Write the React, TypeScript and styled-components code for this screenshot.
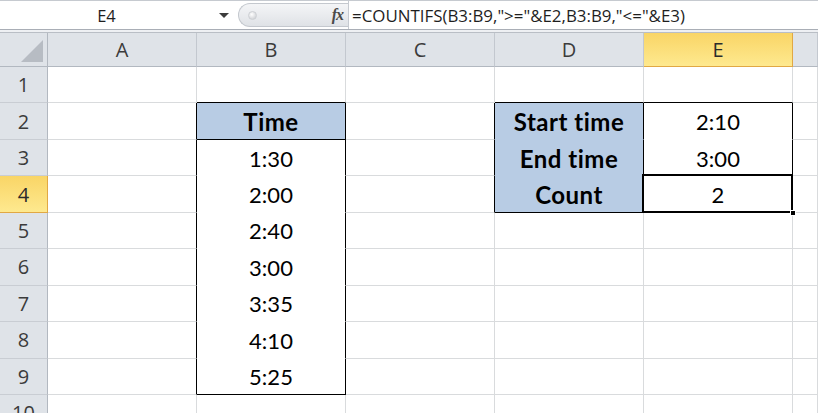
import React from "react";
import styled, { createGlobalStyle, css } from "styled-components";

const GlobalStyle = createGlobalStyle`
  *, *::before, *::after {
    box-sizing: border-box;
  }
  html, body {
    margin: 0;
    padding: 0;
    background: #ffffff;
    overflow: hidden;
  }
`;

const Page = styled.div`
  width: 818px;
  height: 413px;
  overflow: hidden;
  display: flex;
  flex-direction: column;
  background: #ffffff;
  font-family: "Open Sans", "Noto Sans", sans-serif;
`;

const FormulaBar = styled.div`
  flex-shrink: 0;
  height: 30px;
  display: flex;
  align-items: stretch;
  border-top: 1px solid #c6cad0;
  border-bottom: 1px solid #a9aeb6;
  background: #ffffff;
`;

const NameBox = styled.div`
  width: 213px;
  display: flex;
  align-items: center;
  justify-content: center;
  font-size: 16.5px;
  color: #1e1e1e;
`;

const DropArrow = styled.div`
  width: 22px;
  display: flex;
  align-items: center;
  justify-content: center;

  &::before {
    content: "";
    border-left: 5px solid transparent;
    border-right: 5px solid transparent;
    border-top: 5px solid #3c3c3c;
  }
`;

const Pill = styled.div`
  width: 110px;
  margin: 2px 0 2px 3px;
  border-radius: 13px 0 0 13px;
  border: 1px solid #c4c8ce;
  border-right: none;
  background: linear-gradient(#f4f5f7, #dfe2e6);
  display: flex;
  align-items: center;
  justify-content: space-between;
  padding: 0 5px 0 9px;
`;

const CancelDot = styled.span`
  width: 9px;
  height: 9px;
  border-radius: 50%;
  background: radial-gradient(circle at 40% 35%, #ffffff, #c4c7cc);
  border: 1px solid #cdd0d4;
`;

const Fx = styled.span`
  font-family: "Liberation Serif", serif;
  font-style: italic;
  font-weight: bold;
  font-size: 16px;
  color: #4a4a4a;
  letter-spacing: -1px;
`;

const FormulaText = styled.div`
  flex: 1;
  border-left: 1px solid #c6cad0;
  display: flex;
  align-items: center;
  padding-left: 3px;
  font-size: 16.9px;
  color: #1e1e1e;
  white-space: nowrap;
`;

const BarGap = styled.div`
  flex-shrink: 0;
  height: 3px;
  background: #eef0f3;
  border-bottom: 1px solid #b9bec5;
`;

const Sheet = styled.div`
  flex: 1;
  min-height: 0;
  overflow: hidden;
  display: grid;
  grid-template-columns: 48px repeat(5, 149px) 1fr;
  grid-template-rows: 34px repeat(9, 36.44px) 36px;
`;

const headerBase = css<{ $active?: boolean }>`
  display: flex;
  align-items: center;
  justify-content: center;
  font-size: 20px;
  color: ${({ $active }) => ($active ? "#2b2b2b" : "#3b3b3b")};
  background: ${({ $active }) =>
    $active ? "linear-gradient(#f9d566, #fee98f)" : "#dfe3e8"};
`;

const ColHeader = styled.div<{ $active?: boolean }>`
  ${headerBase};
  border-right: 1px solid ${({ $active }) => ($active ? "#e1a844" : "#c3c8cf")};
  border-bottom: 1px solid ${({ $active }) => ($active ? "#e1a844" : "#b2b8c0")};
`;

const RowHeader = styled.div<{ $active?: boolean }>`
  ${headerBase};
  border-right: 1px solid ${({ $active }) => ($active ? "#e1a844" : "#b2b8c0")};
  border-bottom: 1px solid ${({ $active }) => ($active ? "#e1a844" : "#c9cdd3")};
`;

const Corner = styled.div`
  background: #dfe3e8;
  border-right: 1px solid #b2b8c0;
  border-bottom: 1px solid #b2b8c0;
  position: relative;

  &::after {
    content: "";
    position: absolute;
    right: 4px;
    bottom: 4px;
    border-left: 22px solid transparent;
    border-bottom: 22px solid #b7bcc3;
  }
`;

const Cell = styled.div<{
  $fill?: string;
  $bold?: boolean;
  $right: string;
  $bottom: string;
  $selected?: boolean;
}>`
  position: relative;
  display: flex;
  align-items: center;
  justify-content: center;
  background: ${({ $fill }) => $fill || "#ffffff"};
  border-right: 1px solid ${({ $right }) => $right};
  border-bottom: 1px solid ${({ $bottom }) => $bottom};
  font-family: Lato, "Open Sans", sans-serif;
  font-size: ${({ $bold }) => ($bold ? "24px" : "22px")};
  letter-spacing: ${({ $bold }) => ($bold ? "0.5px" : "0")};
  font-weight: ${({ $bold }) => ($bold ? 700 : 400)};
  color: #000000;
  padding-top: 1px;

  ${({ $selected }) =>
    $selected &&
    css`
      &::before {
        content: "";
        position: absolute;
        left: -2px;
        top: -2px;
        right: -1px;
        bottom: -1px;
        border: 2px solid #000000;
        pointer-events: none;
      }
      &::after {
        content: "";
        position: absolute;
        right: -4px;
        bottom: -4px;
        width: 6px;
        height: 6px;
        background: #000000;
        border: 1px solid #ffffff;
        z-index: 2;
      }
    `}
`;

type CellData = { text?: string; fill?: string; bold?: boolean };

const BLUE = "#b8cce4";
const GRID = "#d9dbdd";
const BLACK = "#000000";

const columns = ["A", "B", "C", "D", "E"];

// cells keyed by "col,row" with col 1 = A
const cells: Record<string, CellData> = {
  "2,2": { text: "Time", fill: BLUE, bold: true },
  "2,3": { text: "1:30", fill: "#ffffff" },
  "2,4": { text: "2:00", fill: "#ffffff" },
  "2,5": { text: "2:40", fill: "#ffffff" },
  "2,6": { text: "3:00", fill: "#ffffff" },
  "2,7": { text: "3:35", fill: "#ffffff" },
  "2,8": { text: "4:10", fill: "#ffffff" },
  "2,9": { text: "5:25", fill: "#ffffff" },
  "4,2": { text: "Start time", fill: BLUE, bold: true },
  "4,3": { text: "End time", fill: BLUE, bold: true },
  "4,4": { text: "Count", fill: BLUE, bold: true },
  "5,2": { text: "2:10", fill: "#ffffff" },
  "5,3": { text: "3:00", fill: "#ffffff" },
  "5,4": { text: "2", fill: "#ffffff" },
};

const boxes = [
  { c1: 2, c2: 2, r1: 2, r2: 2 },
  { c1: 2, c2: 2, r1: 2, r2: 9 },
  { c1: 4, c2: 4, r1: 2, r2: 4 },
  { c1: 4, c2: 5, r1: 2, r2: 4 },
];

const rightIsBlack = (c: number, r: number) =>
  boxes.some((b) => r >= b.r1 && r <= b.r2 && (c === b.c2 || c + 1 === b.c1));

const bottomIsBlack = (c: number, r: number) =>
  boxes.some((b) => c >= b.c1 && c <= b.c2 && (r === b.r2 || r + 1 === b.r1));

const edgeColor = (black: boolean, fill?: string) =>
  black ? BLACK : fill || GRID;

const App: React.FC = () => {
  const rows = Array.from({ length: 10 }, (_, i) => i + 1);
  const cols = [1, 2, 3, 4, 5, 6];

  return (
    <>
      <GlobalStyle />
      <Page>
        <FormulaBar>
          <NameBox>E4</NameBox>
          <DropArrow />
          <Pill>
            <CancelDot />
            <Fx>fx</Fx>
          </Pill>
          <FormulaText>=COUNTIFS(B3:B9,"&gt;="&amp;E2,B3:B9,"&lt;="&amp;E3)</FormulaText>
        </FormulaBar>
        <BarGap />
        <Sheet>
          <Corner />
          {columns.map((c) => (
            <ColHeader key={c} $active={c === "E"}>
              {c}
            </ColHeader>
          ))}
          <ColHeader />

          {rows.map((r) => (
            <React.Fragment key={r}>
              <RowHeader $active={r === 4}>{r}</RowHeader>
              {cols.map((c) => {
                const data = cells[`${c},${r}`] || {};
                return (
                  <Cell
                    key={c}
                    $fill={data.fill}
                    $bold={data.bold}
                    $right={edgeColor(rightIsBlack(c, r), data.fill)}
                    $bottom={edgeColor(bottomIsBlack(c, r), data.fill)}
                    $selected={c === 5 && r === 4}
                  >
                    {data.text}
                  </Cell>
                );
              })}
            </React.Fragment>
          ))}
        </Sheet>
      </Page>
    </>
  );
};

export default App;
